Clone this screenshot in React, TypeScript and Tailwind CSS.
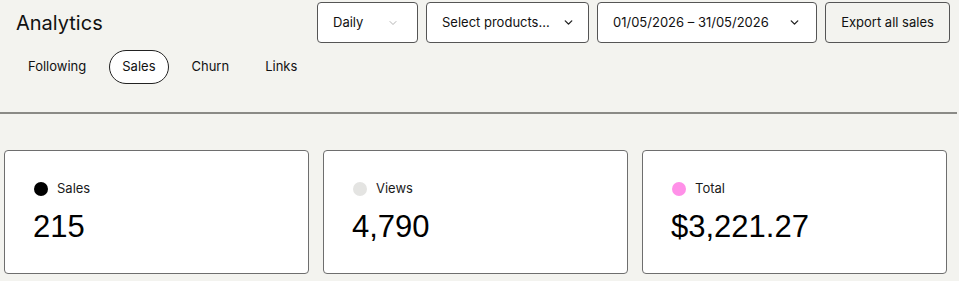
import React from "react";
import { ChevronDown } from "lucide-react";

const ui = { fontFamily: "Inter, 'Noto Sans', sans-serif" };
const num = { fontFamily: "'Liberation Sans', Arial, sans-serif" };

function Card({ dot, label, value }: { dot: string; label: string; value: string }) {
  return (
    <div className="h-[124px] rounded-[4px] border border-[#6e6e6e] bg-white pl-[29px] pt-[28px]">
      <div className="flex h-[20px] items-center gap-[9px]">
        <span className={`h-[14px] w-[14px] rounded-full ${dot}`} />
        <span className="text-[13px] text-[#1a1a1a]" style={ui}>{label}</span>
      </div>
      <div className="-ml-[1px] mt-[9px] text-[31px] leading-[38px] text-black" style={num}>{value}</div>
    </div>
  );
}

export default function App() {
  return (
    <div className="h-[281px] w-[959px] overflow-hidden bg-[#f3f3ef] text-black" style={ui}>
      <div className="flex items-start justify-between pl-[16px] pr-[9px] pt-[2px]">
        <h1 className="mt-[8px] text-[20px] leading-[26px] font-normal text-[#111]">Analytics</h1>
        <div className="flex gap-[8px] whitespace-nowrap text-[13px]">
          <button className="flex h-[41px] w-[101px] items-center justify-between rounded-[4px] border border-[#555] bg-white pl-[15px] pr-[18px] text-[#111]">
            <span>Daily</span>
            <ChevronDown size={12} strokeWidth={1.5} className="text-[#999]" />
          </button>
          <button className="flex h-[41px] w-[163px] items-center justify-between rounded-[4px] border border-[#555] bg-white pl-[15px] pr-[13px] text-[#111]">
            <span>Select products...</span>
            <ChevronDown size={13} strokeWidth={2.5} className="text-[#222]" />
          </button>
          <button className="flex h-[41px] w-[220px] items-center justify-between rounded-[4px] border border-[#555] bg-white pl-[15px] pr-[15px] text-[#111]">
            <span>01/05/2026 – 31/05/2026</span>
            <ChevronDown size={13} strokeWidth={2.5} className="text-[#222]" />
          </button>
          <button className="flex h-[41px] w-[125px] items-center justify-center rounded-[4px] border border-[#555] bg-[#f3f3ef] text-[#111]">
            Export all sales
          </button>
        </div>
      </div>
      <div className="mt-[7px] flex gap-[10px] pl-[15px] text-[13px]">
        {["Following", "Sales", "Churn", "Links"].map((t) => (
          <div
            key={t}
            className={`flex h-[34px] items-center rounded-full px-[12px] text-[#111] ${
              t === "Sales" ? "border border-[#222] bg-white" : "border border-transparent"
            }`}
          >
            {t}
          </div>
        ))}
      </div>
      <div className="mt-[28px] h-[2px] w-[957px] bg-[#8a8a86]" />
      <div className="grid w-[947px] grid-cols-3 gap-[14px] pl-[4px] pt-[36px]">
        <Card dot="bg-black" label="Sales" value="215" />
        <Card dot="bg-[#e4e4e2]" label="Views" value="4,790" />
        <Card dot="bg-[#ff90e8]" label="Total" value="$3,221.27" />
      </div>
    </div>
  );
}
